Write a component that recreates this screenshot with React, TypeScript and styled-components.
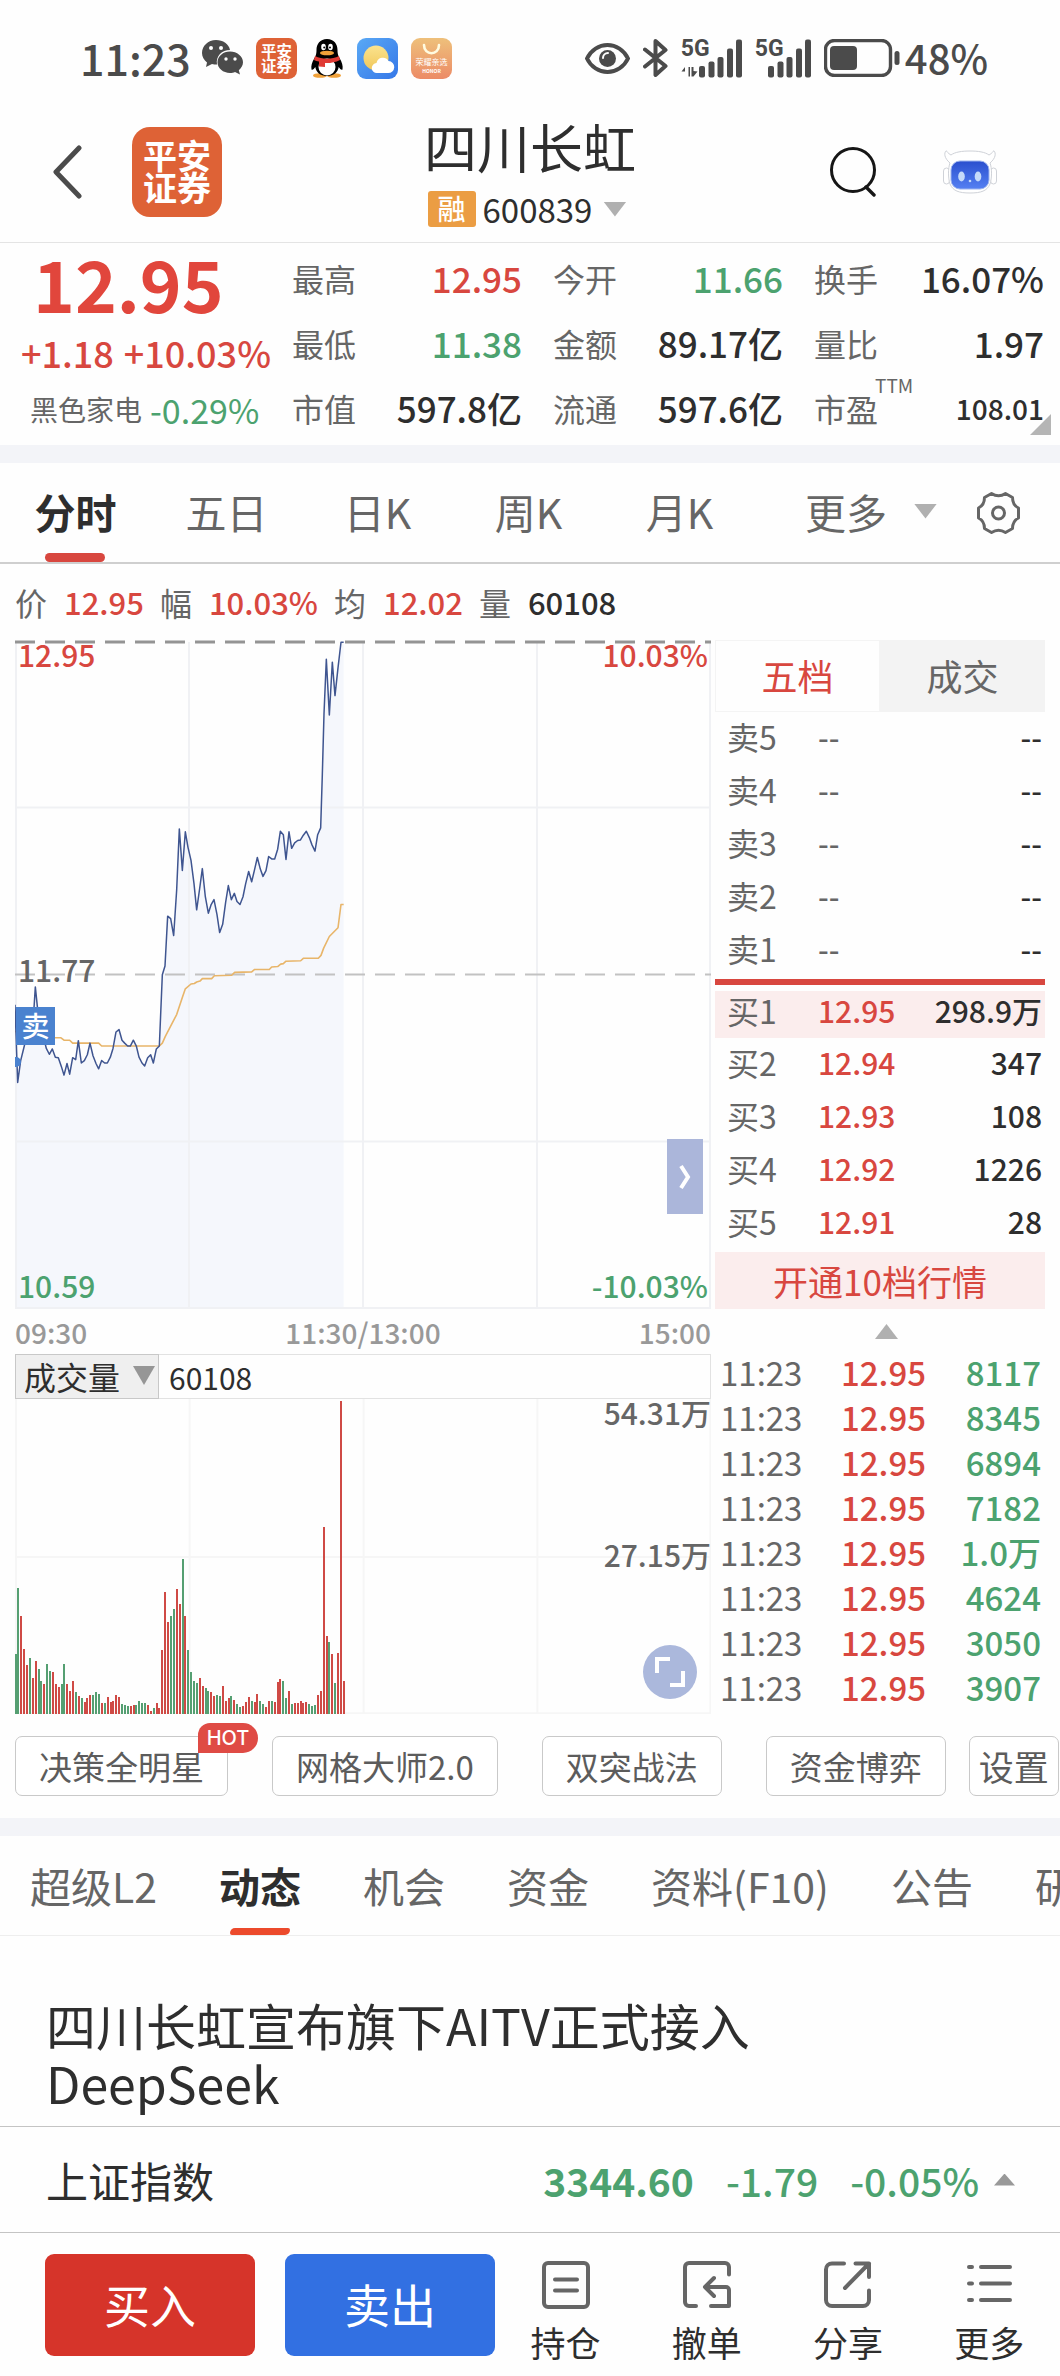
import React, { useState } from 'react';
import styled, { createGlobalStyle } from 'styled-components';

const RED = '#d8473f';
const GREEN = '#4ca26f';
const INK = '#2e2e2e';
const GREY = '#666';

const tones: Record<string, string> = { up: RED, down: GREEN, ink: INK, grey: GREY };

const GlobalStyle = createGlobalStyle`
  * { box-sizing: border-box; }
  body {
    margin: 0;
    background: #fefefe;
    color: ${INK};
    font-family: "Noto Sans CJK SC", "Noto Sans", sans-serif;
    overflow-x: hidden;
  }
  button, select { font: inherit; color: inherit; border: 0; padding: 0; margin: 0; background: none; cursor: pointer; }
  table { border-collapse: collapse; }
  td, th { padding: 0; font-weight: 400; text-align: left; }
  svg { display: block; flex: none; }
`;

const Page = styled.div`
  display: flex;
  flex-direction: column;
  overflow: hidden;
`;

/* ---------- status bar ---------- */
const StatusBar = styled.div`
  display: flex;
  align-items: center;
  justify-content: space-between;
  height: 116px;
  padding: 0 72px 0 80px;
  color: #4b4b4b;
`;
const StatusGroup = styled.div<{ $gap: number }>`
  display: flex;
  align-items: center;
  gap: ${p => p.$gap}px;
`;
const StatusText = styled.span<{ $size: number }>`
  font-size: ${p => p.$size}px;
  line-height: 40px;
  padding-bottom: 2px;
  font-weight: 500;
`;

/* ---------- header ---------- */
const Header = styled.header`
  display: grid;
  grid-template-columns: 1fr auto 1fr;
  align-items: center;
  padding: 0 53px 15px;
  border-bottom: 1px solid #e4e4e4;
`;
const HeaderLeft = styled.div`
  display: flex;
  align-items: center;
  gap: 50px;
`;
const HeaderRight = styled.div`
  display: flex;
  align-items: center;
  justify-content: flex-end;
  gap: 66px;
  padding-right: 10px;
`;
const TitleBox = styled.div`
  display: flex;
  flex-direction: column;
  align-items: center;
  gap: 15px;
`;
const Title = styled.h1`
  margin: 0;
  font-size: 53px;
  line-height: 60px;
  font-weight: 400;
`;
const CodeRow = styled.button`
  display: flex;
  align-items: center;
  gap: 7px;
  height: 36px;
  margin-right: 6px;
  font-size: 33px;
  line-height: 36px;
  i { margin-left: 4px; }
`;
const MarginTag = styled.span`
  width: 48px;
  height: 36px;
  border-radius: 3px;
  background: #eb9d43;
  color: #fff;
  font-size: 28px;
  line-height: 34px;
  font-weight: 500;
  text-align: center;
`;
const Triangle = styled.i<{ $up?: boolean; $w?: number; $h?: number; $color?: string }>`
  display: block;
  flex: none;
  width: ${p => p.$w ?? 23}px;
  height: ${p => p.$h ?? 15}px;
  background: ${p => p.$color ?? '#b0b0b0'};
  clip-path: ${p => (p.$up ? 'polygon(50% 0, 100% 100%, 0 100%)' : 'polygon(0 0, 100% 0, 50% 100%)')};
`;

/* ---------- quote ---------- */
const Quote = styled.section`
  position: relative;
  display: grid;
  grid-template-columns: 276px 1fr;
  padding: 2px 16px 5px;
`;
const QuoteMain = styled.div`
  display: flex;
  flex-direction: column;
  padding-left: 5px;
`;
const LastPrice = styled.div`
  padding-left: 12px;
  color: #e1463c;
  font-size: 71px;
  line-height: 75px;
  font-weight: 700;
`;
const Change = styled.div`
  display: flex;
  gap: 10px;
  color: ${RED};
  font-size: 36px;
  line-height: 64px;
  font-weight: 500;
`;
const Sector = styled.div`
  display: flex;
  align-items: center;
  gap: 8px;
  padding-left: 9px;
  color: ${GREY};
  font-size: 28px;
  line-height: 51px;
`;
const SectorChange = styled.span`
  color: ${GREEN};
  font-size: 34px;
`;
const Metrics = styled.dl`
  display: grid;
  grid-template-columns: repeat(3, 1fr);
  grid-auto-rows: 65px;
  column-gap: 31px;
  margin: 0;
`;
const Metric = styled.div`
  position: relative;
  display: flex;
  align-items: center;
  justify-content: space-between;
`;
const MetricName = styled.dt`
  color: ${GREY};
  font-size: 32px;
  line-height: 48px;
`;
const MetricValue = styled.dd<{ $tone: string; $small?: boolean }>`
  margin: 0;
  color: ${p => tones[p.$tone]};
  font-size: ${p => (p.$small ? 28 : 35)}px;
  line-height: 48px;
  font-weight: 500;
`;
const Ttm = styled.sup`
  position: absolute;
  left: 61px;
  top: 0;
  color: ${GREY};
  font-size: 19px;
  line-height: 20px;
`;
const Corner = styled.i`
  position: absolute;
  right: 9px;
  bottom: 10px;
  border-left: 21px solid transparent;
  border-bottom: 21px solid #b5b5b5;
`;
const Band = styled.div`
  height: 18px;
  background: #f3f4f8;
`;

/* ---------- chart tabs ---------- */
const ChartTabs = styled.nav`
  display: flex;
  height: 101px;
  border-bottom: 2px solid #cfcfcf;
  font-size: 41px;
  line-height: 96px;
  color: ${GREY};
`;
const ChartTab = styled.button<{ $on: boolean }>`
  position: relative;
  width: 151px;
  padding-bottom: 3px;
  font-weight: ${p => (p.$on ? 700 : 400)};
  color: ${p => (p.$on ? INK : GREY)};
  &::after {
    content: '';
    display: ${p => (p.$on ? 'block' : 'none')};
    position: absolute;
    left: 45px;
    right: 46px;
    bottom: 0;
    height: 9px;
    border-radius: 5px;
    background: ${RED};
  }
`;
const MoreTab = styled.button`
  display: flex;
  align-items: center;
  gap: 27px;
  margin-left: auto;
  padding-bottom: 3px;
`;
const GearButton = styled.button`
  margin: 0 40px;
`;

/* ---------- chart area ---------- */
const InfoLine = styled.div`
  display: flex;
  align-items: center;
  gap: 16px;
  padding: 5px 15px;
  font-size: 32px;
  line-height: 66px;
`;
const InfoItem = styled.span<{ $tone: string }>`
  display: flex;
  align-items: center;
  gap: 17px;
  color: ${GREY};
  b { font-size: 31px; font-weight: 500; color: ${p => tones[p.$tone]}; }
`;
const Board = styled.section`
  display: grid;
  grid-template-columns: minmax(0, 1fr) 330px;
  gap: 4px;
  padding: 0 15px;
`;
const Column = styled.div`
  display: flex;
  flex-direction: column;
  min-width: 0;
`;
const ChartBox = styled.div<{ $h: number }>`
  position: relative;
  height: ${p => p.$h}px;
  > svg { width: 100%; height: 100%; }
`;
const ChartLabel = styled.span<{ $tone: string; $top: number; $right?: boolean; $edge?: number }>`
  position: absolute;
  top: ${p => p.$top}px;
  ${p => (p.$right ? 'right' : 'left')}: ${p => p.$edge ?? 3}px;
  color: ${p => tones[p.$tone]};
  font-size: 30px;
  line-height: 30px;
  font-weight: 500;
`;
const SellMark = styled.span`
  position: absolute;
  left: 1px;
  top: 367px;
  width: 39px;
  height: 38px;
  background: #4a82cf;
  color: #fff;
  font-size: 28px;
  line-height: 36px;
  font-weight: 500;
  text-align: center;
`;
const Expand = styled.button`
  position: absolute;
  right: 8px;
  bottom: 95px;
  display: grid;
  place-items: center;
  width: 36px;
  height: 75px;
  background: #abb6da;
`;
const FullScreen = styled.button`
  position: absolute;
  right: 14px;
  bottom: 15px;
  display: grid;
  place-items: center;
  width: 54px;
  height: 54px;
  border-radius: 50%;
  background: #abb8dc;
`;
const TimeAxis = styled.div`
  display: flex;
  justify-content: space-between;
  height: 45px;
  color: #999;
  font-size: 28px;
  line-height: 46px;
  font-weight: 500;
`;
const VolumeHead = styled.div`
  display: flex;
  align-items: center;
  height: 45px;
  border: 1px solid #e2e2e2;
  border-left: 0;
  font-size: 30px;
`;
const SelectWrap = styled.label`
  position: relative;
  display: flex;
  height: 45px;
  margin: -1px 10px -1px 0;
  i { position: absolute; right: 4px; top: 12px; pointer-events: none; }
`;
const IndicatorSelect = styled.select`
  appearance: none;
  width: 144px;
  padding: 0 0 2px 8px;
  border: 1px solid #c8c8c8;
  border-radius: 0;
  background: #efefef;
  font-size: 32px;
  line-height: 40px;
`;

/* ---------- order book ---------- */
const BookTabs = styled.div`
  display: grid;
  grid-template-columns: 1fr 1fr;
  height: 72px;
`;
const BookTab = styled.button<{ $on: boolean }>`
  background: ${p => (p.$on ? '#fefefe' : '#f3f3f3')};
  border: 1px solid ${p => (p.$on ? '#f4f4f4' : '#f3f3f3')};
  color: ${p => (p.$on ? RED : GREY)};
  font-size: 36px;
  line-height: 66px;
  padding-bottom: 2px;
`;
const Book = styled.table`
  width: 100%;
  font-size: 30px;
  table-layout: fixed;
`;
const BookRow = styled.tr<{ $best?: boolean }>`
  background: ${p => (p.$best ? '#fbeded' : 'none')};
  th, td { height: ${p => (p.$best ? 47 : 53)}px; padding-bottom: ${p => (p.$best ? 8 : 4)}px; line-height: 39px; vertical-align: middle; }
  th { width: 103px; padding-left: 12px; color: ${GREY}; font-size: 32px; }
`;
const BookPrice = styled.td<{ $empty?: boolean }>`
  color: ${p => (p.$empty ? GREY : RED)};
  font-weight: 500;
  width: 90px;
`;
const BookSize = styled.td`
  && { padding-right: 3px; }
  text-align: right;
  font-weight: 500;
`;
const Divider = styled.div`
  height: 6px;
  margin: 2px 0 6px;
  background: ${RED};
`;
const OpenTen = styled.button`
  height: 57px;
  margin-top: 2px;
  background: #fbeded;
  color: ${RED};
  font-size: 35px;
  line-height: 56px;
`;
const Collapse = styled.button`
  display: flex;
  justify-content: center;
  height: 45px;
  padding: 15px 0 0 13px;
`;
const Trades = styled.table`
  width: 100%;
  table-layout: fixed;
  font-size: 33px;
  td { height: 45px; line-height: 36px; vertical-align: top; }
  td:nth-child(1) { width: 126px; padding-left: 5px; color: ${GREY}; }
  td:nth-child(2) { width: 100px; color: ${RED}; font-weight: 500; }
  td:nth-child(3) { padding-right: 4px; color: ${GREEN}; font-weight: 500; text-align: right; }
`;

/* ---------- tool buttons ---------- */
const Tools = styled.div`
  display: flex;
  padding: 22px 0 22px 15px;
`;
const Tool = styled.button<{ $compact?: boolean }>`
  position: relative;
  flex: none;
  height: 60px;
  margin-right: ${p => (p.$compact ? 0 : 44)}px;
  padding: 0 ${p => (p.$compact ? 9 : 23)}px;
  border: 1px solid #c9c9c9;
  border-radius: 7px;
  background: #fff;
  color: #5c5c5c;
  font-size: ${p => (p.$compact ? 35 : 33)}px;
  line-height: 58px;
  &:nth-last-child(2) { margin-right: 23px; }
`;
const Hot = styled.span`
  position: absolute;
  right: -31px;
  top: -14px;
  width: 60px;
  height: 30px;
  border-radius: 12px 15px 15px 0;
  background: #df4b45;
  color: #fff;
  font-family: Inter, sans-serif;
  font-size: 20px;
  line-height: 30px;
  font-weight: 500;
`;

/* ---------- news ---------- */
const NewsTabs = styled.nav`
  display: flex;
  gap: 62px;
  height: 100px;
  padding-left: 30px;
  border-bottom: 1px solid #eee;
  font-size: 41px;
  line-height: 98px;
`;
const NewsTab = styled.button<{ $on: boolean }>`
  position: relative;
  flex: none;
  padding-bottom: 1px;
  font-weight: ${p => (p.$on ? 700 : 400)};
  color: ${p => (p.$on ? INK : GREY)};
  &::after {
    content: '';
    display: ${p => (p.$on ? 'block' : 'none')};
    position: absolute;
    left: 11px;
    right: 11px;
    bottom: 0;
    height: 7px;
    border-radius: 5px 2px 5px 2px;
    background: #ec4a2c;
  }
`;
const Headline = styled.h2`
  margin: 0;
  padding: 59px 110px 15px 46px;
  font-size: 50px;
  line-height: 58px;
  font-weight: 400;
`;

/* ---------- index + action bars ---------- */
const IndexBar = styled.button`
  display: flex;
  align-items: center;
  height: 106px;
  padding: 0 45px 0 46px;
  border-top: 1px solid #c4c4c4;
  font-size: 42px;
  text-align: left;
`;
const IndexValue = styled.span<{ $bold?: boolean; $gap: number }>`
  margin-right: ${p => p.$gap}px;
  color: ${GREEN};
  font-size: 39px;
  font-weight: ${p => (p.$bold ? 700 : 500)};
`;
const IndexName = styled.span`
  flex: 1;
`;
const ActionBar = styled.footer`
  display: flex;
  gap: 30px;
  padding: 21px 0 20px 45px;
  border-top: 1px solid #c4c4c4;
`;
const TradeButton = styled.button<{ $sell?: boolean }>`
  flex: none;
  width: 210px;
  height: 102px;
  padding-bottom: 4px;
  border-radius: 9px;
  background: ${p => (p.$sell ? '#3270e2' : '#d6342a')};
  color: #fff;
  font-size: 46px;
  line-height: 96px;
`;
const Actions = styled.div`
  display: grid;
  grid-template-columns: repeat(4, 1fr);
  flex: 1;
  margin-left: -30px;
`;
const Action = styled.button`
  display: flex;
  flex-direction: column;
  align-items: center;
  gap: 10px;
  padding-top: 7px;
  font-size: 35px;
  line-height: 45px;
`;

/* ---------- icons ---------- */
const WeChatIcon = () => (
  <svg width="41" height="36" viewBox="0 0 41 36" fill="#4b4b4b">
    <path d="M14 0C6 0 0 6 0 13c0 4 2 7 5 9.500L4 27l6-3c1.500.5 3 .6 5 .6C13.500 16 20 10 28 10 27 4 21 0 14 0Z" />
    <path d="M28 11.500c-7 0-12.500 4.800-12.500 10.800S21 33 28 33c2 0 3.500-.4 5-1l5 2.500-1.200-4.300c2.500-2 4.200-4.800 4.200-7.900 0-6-6-10.800-13-10.800Z" />
    <g fill="#fefefe"><circle cx="9" cy="8" r="2" /><circle cx="19" cy="8" r="2" /><circle cx="24" cy="19" r="1.700" /><circle cx="33" cy="19" r="1.700" /></g>
  </svg>
);
const PinganLogo = ({ size }: { size: number }) => (
  <svg width={size} height={size} viewBox="0 0 90 90">
    <rect width="90" height="90" rx="18" fill="#de6236" />
    <g fill="#fff" fontSize="34" fontWeight="700" textAnchor="middle">
      <text x="45" y="42">平安</text>
      <text x="45" y="74">证券</text>
    </g>
  </svg>
);
const QQIcon = () => (
  <svg width="34" height="39" viewBox="0 0 34 39">
    <ellipse cx="10" cy="36.500" rx="7" ry="2.300" fill="#f0a13a" />
    <ellipse cx="24" cy="36.500" rx="7" ry="2.300" fill="#f0a13a" />
    <path d="M17 0C10 0 6.500 5 6.500 11c0 3-.3 5-2 8C2 23 .8 27 1.500 30.500c1 1 2.500-.5 3.800-2.500C6 33 10 37 17 37s11-4 11.700-9c1.300 2 2.800 3.500 3.800 2.500.7-3.500-.5-7.500-3-11.500-1.700-3-2-5-2-8C27.500 5 24 0 17 0Z" />
    <ellipse cx="17" cy="28" rx="8.500" ry="8.500" fill="#fff" />
    <path d="M5 17c7 3.500 17 3.500 24 0l1 4c-5 2.600-11 3.400-15 3v4l-6-.5v-5c-2-.3-3.600-.8-5-1.500l1-4Z" fill="#e03a34" />
    <ellipse cx="13.500" cy="8" rx="2.300" ry="3.300" fill="#fff" /><ellipse cx="20.500" cy="8" rx="2.300" ry="3.300" fill="#fff" />
    <circle cx="14.200" cy="8.500" r="1" /><circle cx="20" cy="8.500" r="1" />
    <ellipse cx="17" cy="14" rx="7" ry="2.300" fill="#f0a13a" />
  </svg>
);
const WeatherIcon = () => (
  <svg width="41" height="41" viewBox="0 0 41 41">
    <defs>
      <linearGradient id="sky" x2="1" y2="1"><stop stopColor="#5aa9f5" /><stop offset="1" stopColor="#3577e8" /></linearGradient>
      <linearGradient id="sun" x2="0" y2="1"><stop stopColor="#fbe38e" /><stop offset="1" stopColor="#f0c75a" /></linearGradient>
    </defs>
    <rect width="41" height="41" rx="9" fill="url(#sky)" />
    <circle cx="19" cy="20" r="12.500" fill="url(#sun)" />
    <path d="M20 35a5 5 0 0 1-.5-10 6.500 6.500 0 0 1 12-2 6 6 0 0 1-.5 12Z" fill="#fff" />
  </svg>
);
const HonorIcon = () => (
  <svg width="41" height="41" viewBox="0 0 41 41">
    <defs><linearGradient id="bag" x2="0" y2="1"><stop stopColor="#eec07b" /><stop offset="1" stopColor="#ec8b66" /></linearGradient></defs>
    <rect width="41" height="41" rx="9" fill="url(#bag)" />
    <path d="M13 7c0 11 15 11 15 0" fill="none" stroke="#fffbe0" strokeWidth="2.600" strokeLinecap="round" />
    <g fill="#fff" textAnchor="middle"><text x="20.500" y="27" fontSize="8">荣耀亲选</text><text x="20.500" y="35" fontSize="5" fontWeight="700">HONOR</text></g>
  </svg>
);
const EyeIcon = () => (
  <svg width="45" height="31" viewBox="0 0 45 31">
    <path d="M2 15.500C6 7 14 2 22.500 2S39 7 43 15.500C39 24 31 29 22.500 29S6 24 2 15.500Z" fill="none" stroke="#4b4b4b" strokeWidth="4" strokeLinejoin="round" />
    <circle cx="22.500" cy="15.500" r="8.500" fill="#4b4b4b" />
    <path d="M18 15a5 5 0 0 1 5-5" fill="none" stroke="#fefefe" strokeWidth="2" strokeLinecap="round" />
  </svg>
);
const BluetoothIcon = () => (
  <svg width="25" height="38" viewBox="0 0 25 38" fill="none" stroke="#4b4b4b" strokeWidth="4" strokeLinejoin="round" strokeLinecap="round">
    <path d="M2 10.500 22.500 27 12.500 36V2l10 9L2 27.500" />
  </svg>
);
const SignalWrap = styled.span<{ $w: number }>`
  position: relative;
  width: ${p => p.$w}px;
  height: 39px;
  svg { position: absolute; right: 0; top: 0; }
`;
const SignalLabel = styled.span`
  position: absolute;
  left: 0;
  top: -3px;
  font-family: Roboto, sans-serif;
  font-size: 23px;
  line-height: 26px;
  font-weight: 700;
`;
const SignalIcon = ({ arrows }: { arrows?: boolean }) => (
  <SignalWrap $w={arrows ? 61 : 56}>
    <svg width="61" height="39" viewBox="0 0 61 39" fill="#4b4b4b">
      {arrows && <path d="M4 37.500V28L.5 32.500H4ZM7.500 28H9v9.500H7.500Zm3 0h2v4l4 .5-4 5h-2Z" />}
      <rect x="18" y="27" width="6" height="11.500" rx="2" /><rect x="27.500" y="22.500" width="6" height="16" rx="2" />
      <rect x="36.500" y="18" width="6" height="20.500" rx="2" /><rect x="46" y="9.500" width="6" height="29" rx="2" />
      <rect x="55" y="0.500" width="6" height="38" rx="2" />
    </svg>
    <SignalLabel>5G</SignalLabel>
  </SignalWrap>
);
const BatteryIcon = () => (
  <svg width="76" height="38" viewBox="0 0 76 38">
    <rect x="1.500" y="1.500" width="65" height="35" rx="9" fill="none" stroke="#4b4b4b" strokeWidth="3.400" />
    <rect x="6" y="7" width="27" height="24" rx="4" fill="#4b4b4b" /><rect x="70.500" y="12" width="5" height="14" rx="2.500" fill="#4b4b4b" />
  </svg>
);
const BackIcon = () => (
  <svg width="29" height="54" viewBox="0 0 29 54" fill="none" stroke="#4b4b4b" strokeWidth="5" strokeLinecap="round" strokeLinejoin="round">
    <path d="M26 3 3 27l23 24" />
  </svg>
);
const SearchIcon = () => (
  <svg width="47" height="51" viewBox="0 0 47 51" fill="none" stroke="#161616" strokeWidth="3">
    <circle cx="23" cy="24" r="21.500" /><path d="m36 41 8 8" strokeWidth="3.400" strokeLinecap="round" />
  </svg>
);
const RobotIcon = () => (
  <svg width="54" height="44" viewBox="0 0 54 44">
    <defs><linearGradient id="face" x2="0" y2="1"><stop stopColor="#2a4fce" /><stop offset="1" stopColor="#5580f2" /></linearGradient></defs>
    <g fill="#fff" stroke="#cfd2d8" strokeWidth="1">
      <rect x="0.500" y="18" width="6" height="16" rx="3" /><rect x="47.500" y="18" width="6" height="16" rx="3" />
      <path d="M7 13C1 8 1 3 3 .8 4.500 1 5 4 8 5c4-3 11-4 19-4s15 1 19 4c3-1 3.500-4 5-4.200C53 3 53 8 47 13c2 5 2 15 0 21-3 7-9 9-20 9S10 41 7 34c-2-6-2-16 0-21Z" />
    </g>
    <rect x="8" y="11" width="38" height="28" rx="9" fill="url(#face)" stroke="#9db4ee" strokeWidth="1" />
    <g fill="#c5daf9"><ellipse cx="18.500" cy="26.500" rx="3.300" ry="5" /><ellipse cx="35" cy="26.500" rx="3.300" ry="5" /><circle cx="27" cy="31" r="1.300" /></g>
  </svg>
);
const GearIcon = () => (
  <svg width="43" height="44" viewBox="0 0 43 44" fill="none" stroke="#666" strokeWidth="3" strokeLinejoin="round">
    <path d="M14.500 2.500Q21.500 7 28.500 2.500L35.500 6.500Q35.500 14 41.500 17V27Q35.500 30 35.500 37.500L28.500 41.500Q21.500 37 14.500 41.500L7.500 37.500Q7.500 30 1.500 27V17Q7.500 14 7.500 6.500Z" />
    <circle cx="21.500" cy="22" r="6" />
  </svg>
);
const HoldingsIcon = () => (
  <svg width="48" height="48" viewBox="0 0 48 48" fill="none" stroke="#666" strokeWidth="4" strokeLinecap="round">
    <rect x="2" y="2" width="44" height="44" rx="4" /><path d="M13 18.500h22M13 29.500h22" />
  </svg>
);
const CancelIcon = () => (
  <svg width="48" height="48" viewBox="0 0 48 48" fill="none" stroke="#666" strokeWidth="4" strokeLinecap="round" strokeLinejoin="round">
    <path d="M46 13.500V6a4 4 0 0 0-4-4H6a4 4 0 0 0-4 4v35a4 4 0 0 0 4 4h7M28 45h18V29a3 3 0 0 0-3-3H22M31 17l-9 9 9 9" />
  </svg>
);
const ShareIcon = () => (
  <svg width="48" height="48" viewBox="0 0 48 48" fill="none" stroke="#666" strokeWidth="4" strokeLinecap="round" strokeLinejoin="round">
    <path d="M20 2.500H8a6 6 0 0 0-6 6V39a6 6 0 0 0 6 6h31a6 6 0 0 0 6-6V29.500M31.500 2.500H45V16M45 2.500 21 27" />
  </svg>
);
const ListIcon = () => (
  <svg width="48" height="48" viewBox="0 0 48 48" fill="none" stroke="#666" strokeWidth="4" strokeLinecap="round">
    <path d="M4 6h3M16 6h29M4 22.500h3M16 22.500h29M4 39h3M16 39h29" />
  </svg>
);

/* ---------- chart data ---------- */
const PRICE = '45,895 53,1055 62,1010 71,985 80,960 90,950 98,945 106,858 113,905 122,950 130,960 139,985 148,997 157,986 166,1003 175,1004 184,1022 192,1040 201,1016 209,1038 218,1004 227,1008 235,969 244,1015 253,1010 262,998 270,974 279,1000 288,1016 296,1027 305,1010 314,1015 322,1015 331,1003 339,985 348,951 357,946 366,968 374,974 383,980 391,980 400,968 409,980 417,1003 426,1015 434,1021 443,1004 452,998 460,1015 469,986 478,980 487,833 495,815 503,712 512,717 521,752 530,658 538,532 547,618 556,538 564,570 573,597 582,645 590,699 599,655 607,614 616,672 625,706 633,689 642,678 651,709 659,746 668,729 677,683 685,649 694,678 703,665 711,682 720,688 729,672 737,645 746,620 755,641 763,618 772,591 781,615 789,630 798,618 806,589 815,594 824,594 833,574 841,537 850,544 858,595 867,538 875,572 884,561 893,556 901,555 910,545 919,537 928,550 936,565 945,578 953,544 962,530 967,420 972,295 979,182 988,297 997,188 1005,257 1014,200 1023,147 1031,147';
const AVERAGE = '45,950 165,963 183,963 192,968 209,968 218,974 296,974 305,980 478,980 487,974 496,960 530,915 547,880 556,862 573,852 583,851 590,848 600,846 607,841 635,841 643,835 695,834 704,828 755,827 764,822 808,822 815,817 833,816 842,811 850,810 858,805 902,804 910,799 955,799 963,793 971,778 988,754 1014,736 1023,688 1031,688';

/* minute x, top of bar, direction */
const VOLUME = '48,1083,g 54,891,g 63,973,r 72,1069,r 81,1115,r 90,1095,g 99,1153,r 108,1103,r 117,1127,g 123,1159,g 132,1168,r 141,1112,g 150,1132,g 159,1135,r 168,1168,r 177,1179,r 186,1168,g 192,1112,g 201,1168,r 210,1188,r 219,1161,r 228,1191,g 237,1205,r 246,1211,g 255,1222,r 261,1211,r 270,1202,r 279,1202,g 288,1193,g 297,1199,g 306,1225,r 315,1225,g 324,1208,r 333,1222,r 339,1217,r 348,1202,r 357,1208,r 366,1228,g 375,1231,g 384,1234,g 393,1234,r 402,1231,r 408,1231,g 417,1217,g 426,1225,g 435,1225,g 444,1231,r 453,1246,r 462,1240,g 471,1225,r 477,1240,r 486,1071,r 495,903,r 504,988,r 513,973,g 522,952,g 531,894,r 540,938,r 549,807,g 555,973,r 564,1071,g 573,1135,g 582,1161,g 591,1167,g 600,1153,r 609,1176,r 618,1182,g 624,1188,g 633,1191,r 642,1205,r 651,1202,g 660,1205,g 669,1176,r 678,1217,r 687,1211,r 693,1205,g 702,1214,r 711,1228,g 720,1237,g 729,1234,r 738,1220,r 747,1208,r 756,1217,g 765,1220,r 771,1199,r 780,1217,g 789,1228,g 798,1237,r 807,1217,r 816,1217,g 825,1220,r 834,1164,r 840,1156,r 849,1159,g 858,1211,g 867,1188,r 876,1228,g 885,1225,r 894,1225,r 903,1217,r 909,1225,r 918,1220,r 927,1228,g 936,1234,g 945,1231,g 954,1202,r 963,1188,r 972,714,r 981,1031,r 987,1048,g 996,1083,r 1005,1167,g 1014,1080,r 1023,348,r 1032,1161,r'
  .split(' ')
  .map(s => s.split(','))
  .map(([x, top, dir]) => ({ x: Number(x), top: Number(top), color: dir === 'g' ? '#559f72' : '#cf4a45' }));

const PriceChart = () => (
  <svg viewBox="0 0 696 669" preserveAspectRatio="none" fill="none" role="img" aria-label="分时走势">
    <g transform="translate(-15 -69) scale(.33333 .48473)">
      <polygon points={`45,1521 ${PRICE} 1031,1521`} fill="#f5f7fc" />
    </g>
    <g stroke="#f0f1f4" strokeWidth="2">
      <path d="M1 2V668M174 2V668M348 2V668M522 2V668M695 2V668M0 167.500H696M0 501.500H696M0 668H696" />
    </g>
    <path d="M0 2H696" stroke="#949494" strokeWidth="3" strokeDasharray="20 10" />
    <path d="M0 334.500H696" stroke="#c2c2c2" strokeWidth="2" strokeDasharray="20 10" />
    <g transform="translate(-15 -69) scale(.33333 .48473)" strokeLinejoin="round">
      <polyline points={AVERAGE} stroke="#e8b569" strokeWidth="1.600" vectorEffect="non-scaling-stroke" />
      <polyline points={PRICE} stroke="#3f5590" strokeWidth="1.500" vectorEffect="non-scaling-stroke" />
    </g>
    <circle cx="1" cy="422" r="5" fill="#4a82cf" />
  </svg>
);

const VolumeChart = () => (
  <svg viewBox="45 343 2088 913" preserveAspectRatio="none" role="img" aria-label="成交量">
    <g stroke="#f6f6f6" strokeWidth="2" fill="none">
      <path vectorEffect="non-scaling-stroke" d="M48 343V1256M569 343V1256M1091 343V1256M1612 343V1256M2131 343V1256M45 801H2133M45 1254H2133" />
    </g>
    <g shapeRendering="crispEdges">
      {VOLUME.map(b => (
        <rect key={b.x} x={b.x - 3} y={b.top} width="6" height={1256 - b.top} fill={b.color} />
      ))}
    </g>
  </svg>
);

const metrics = [
  ['最高', '12.95', 'up'], ['今开', '11.66', 'down'], ['换手', '16.07%', 'ink'],
  ['最低', '11.38', 'down'], ['金额', '89.17亿', 'ink'], ['量比', '1.97', 'ink'],
  ['市值', '597.8亿', 'ink'], ['流通', '597.6亿', 'ink'], ['市盈', '108.01', 'ink'],
];
const bids = [['1', '12.95', '298.9万'], ['2', '12.94', '347'], ['3', '12.93', '108'], ['4', '12.92', '1226'], ['5', '12.91', '28']];
const trades = ['8117', '8345', '6894', '7182', '1.0万', '4624', '3050', '3907'];
const newsTabs = ['超级L2', '动态', '机会', '资金', '资料(F10)', '公告', '研报'];

export default function App() {
  const [period, setPeriod] = useState('分时');
  const [bookTab, setBookTab] = useState('五档');
  const [news, setNews] = useState('动态');
  return (
    <Page>
      <GlobalStyle />
      <StatusBar>
        <StatusGroup $gap={11}>
          <StatusText $size={43}>11:23</StatusText>
          <StatusGroup $gap={13}>
            <WeChatIcon />
            <PinganLogo size={41} />
            <QQIcon />
            <WeatherIcon />
            <HonorIcon />
          </StatusGroup>
        </StatusGroup>
        <StatusGroup $gap={13}>
          <EyeIcon />
          <BluetoothIcon />
          <SignalIcon arrows />
          <SignalIcon />
          <StatusGroup $gap={5}>
            <BatteryIcon />
            <StatusText $size={40}>48%</StatusText>
          </StatusGroup>
        </StatusGroup>
      </StatusBar>

      <Header>
        <HeaderLeft>
          <button aria-label="返回"><BackIcon /></button>
          <PinganLogo size={90} />
        </HeaderLeft>
        <TitleBox>
          <Title>四川长虹</Title>
          <CodeRow>
            <MarginTag>融</MarginTag>
            600839
            <Triangle />
          </CodeRow>
        </TitleBox>
        <HeaderRight>
          <button aria-label="搜索"><SearchIcon /></button>
          <button aria-label="智能助手"><RobotIcon /></button>
        </HeaderRight>
      </Header>

      <Quote>
        <QuoteMain>
          <LastPrice>12.95</LastPrice>
          <Change><span>+1.18</span><span>+10.03%</span></Change>
          <Sector>黑色家电<SectorChange>-0.29%</SectorChange></Sector>
        </QuoteMain>
        <Metrics>
          {metrics.map(([name, value, tone]) => (
            <Metric key={name}>
              <MetricName>{name}</MetricName>
              {name === '市盈' && <Ttm>TTM</Ttm>}
              <MetricValue $tone={tone} $small={name === '市盈'}>{value}</MetricValue>
            </Metric>
          ))}
        </Metrics>
        <Corner />
      </Quote>
      <Band />

      <ChartTabs>
        {['分时', '五日', '日K', '周K', '月K'].map(t => (
          <ChartTab key={t} $on={t === period} onClick={() => setPeriod(t)}>{t}</ChartTab>
        ))}
        <MoreTab>更多<Triangle /></MoreTab>
        <GearButton aria-label="设置"><GearIcon /></GearButton>
      </ChartTabs>

      <InfoLine>
        <InfoItem $tone="up">价<b>12.95</b></InfoItem>
        <InfoItem $tone="up">幅<b>10.03%</b></InfoItem>
        <InfoItem $tone="up">均<b>12.02</b></InfoItem>
        <InfoItem $tone="ink">量<b>60108</b></InfoItem>
      </InfoLine>

      <Board>
        <Column>
          <ChartBox $h={669}>
            <PriceChart />
            <ChartLabel $tone="up" $top={-1}>12.95</ChartLabel>
            <ChartLabel $tone="up" $top={-1} $right>10.03%</ChartLabel>
            <ChartLabel $tone="grey" $top={314}>11.77</ChartLabel>
            <ChartLabel $tone="down" $top={630}>10.59</ChartLabel>
            <ChartLabel $tone="down" $top={630} $right>-10.03%</ChartLabel>
            <SellMark>卖</SellMark>
            <Expand aria-label="展开">
              <svg width="14" height="26" viewBox="0 0 14 26" fill="none" stroke="#fff" strokeWidth="4"><path d="m3 2 7 11-7 11" /></svg>
            </Expand>
          </ChartBox>
          <TimeAxis><span>09:30</span><span>11:30/13:00</span><span>15:00</span></TimeAxis>
          <VolumeHead>
            <SelectWrap>
              <IndicatorSelect aria-label="指标"><option>成交量</option><option>MACD</option></IndicatorSelect>
              <Triangle $w={22} $h={19} $color="#969696" />
            </SelectWrap>
            60108
          </VolumeHead>
          <ChartBox $h={315}>
            <VolumeChart />
            <ChartLabel $tone="grey" $top={-2} $right $edge={0}>54.31万</ChartLabel>
            <ChartLabel $tone="grey" $top={140} $right $edge={0}>27.15万</ChartLabel>
            <FullScreen aria-label="全屏">
              <svg width="32" height="32" viewBox="0 0 32 32" fill="none" stroke="#fff" strokeWidth="4"><path d="M3 17V3h13M29 15v14H16" /></svg>
            </FullScreen>
          </ChartBox>
        </Column>

        <Column>
          <BookTabs>
            {['五档', '成交'].map(t => (
              <BookTab key={t} $on={t === bookTab} onClick={() => setBookTab(t)}>{t}</BookTab>
            ))}
          </BookTabs>
          <Book>
            <tbody>
              {[5, 4, 3, 2, 1].map(n => (
                <BookRow key={n}>
                  <th scope="row">卖{n}</th>
                  <BookPrice $empty>--</BookPrice>
                  <BookSize>--</BookSize>
                </BookRow>
              ))}
            </tbody>
          </Book>
          <Divider />
          <Book>
            <tbody>
              {bids.map(([n, price, size]) => (
                <BookRow key={n} $best={n === '1'}>
                  <th scope="row">买{n}</th>
                  <BookPrice>{price}</BookPrice>
                  <BookSize>{size}</BookSize>
                </BookRow>
              ))}
            </tbody>
          </Book>
          <OpenTen>开通10档行情</OpenTen>
          <Collapse aria-label="收起"><Triangle $up /></Collapse>
          <Trades>
            <tbody>
              {trades.map(size => (
                <tr key={size}><td>11:23</td><td>12.95</td><td>{size}</td></tr>
              ))}
            </tbody>
          </Trades>
        </Column>
      </Board>

      <Tools>
        <Tool>决策全明星<Hot>HOT</Hot></Tool>
        <Tool>网格大师2.0</Tool>
        <Tool>双突战法</Tool>
        <Tool>资金博弈</Tool>
        <Tool $compact>设置</Tool>
      </Tools>
      <Band />

      <NewsTabs>
        {newsTabs.map(t => (
          <NewsTab key={t} $on={t === news} onClick={() => setNews(t)}>{t}</NewsTab>
        ))}
      </NewsTabs>
      <Headline>四川长虹宣布旗下AITV正式接入DeepSeek</Headline>

      <IndexBar>
        <IndexName>上证指数</IndexName>
        <IndexValue $bold $gap={32}>3344.60</IndexValue>
        <IndexValue $gap={32}>-1.79</IndexValue>
        <IndexValue $gap={15}>-0.05%</IndexValue>
        <Triangle $up $w={21} $h={12} $color="#999" />
      </IndexBar>
      <ActionBar>
        <TradeButton>买入</TradeButton>
        <TradeButton $sell>卖出</TradeButton>
        <Actions>
          <Action><HoldingsIcon />持仓</Action>
          <Action><CancelIcon />撤单</Action>
          <Action><ShareIcon />分享</Action>
          <Action><ListIcon />更多</Action>
        </Actions>
      </ActionBar>
    </Page>
  );
}
